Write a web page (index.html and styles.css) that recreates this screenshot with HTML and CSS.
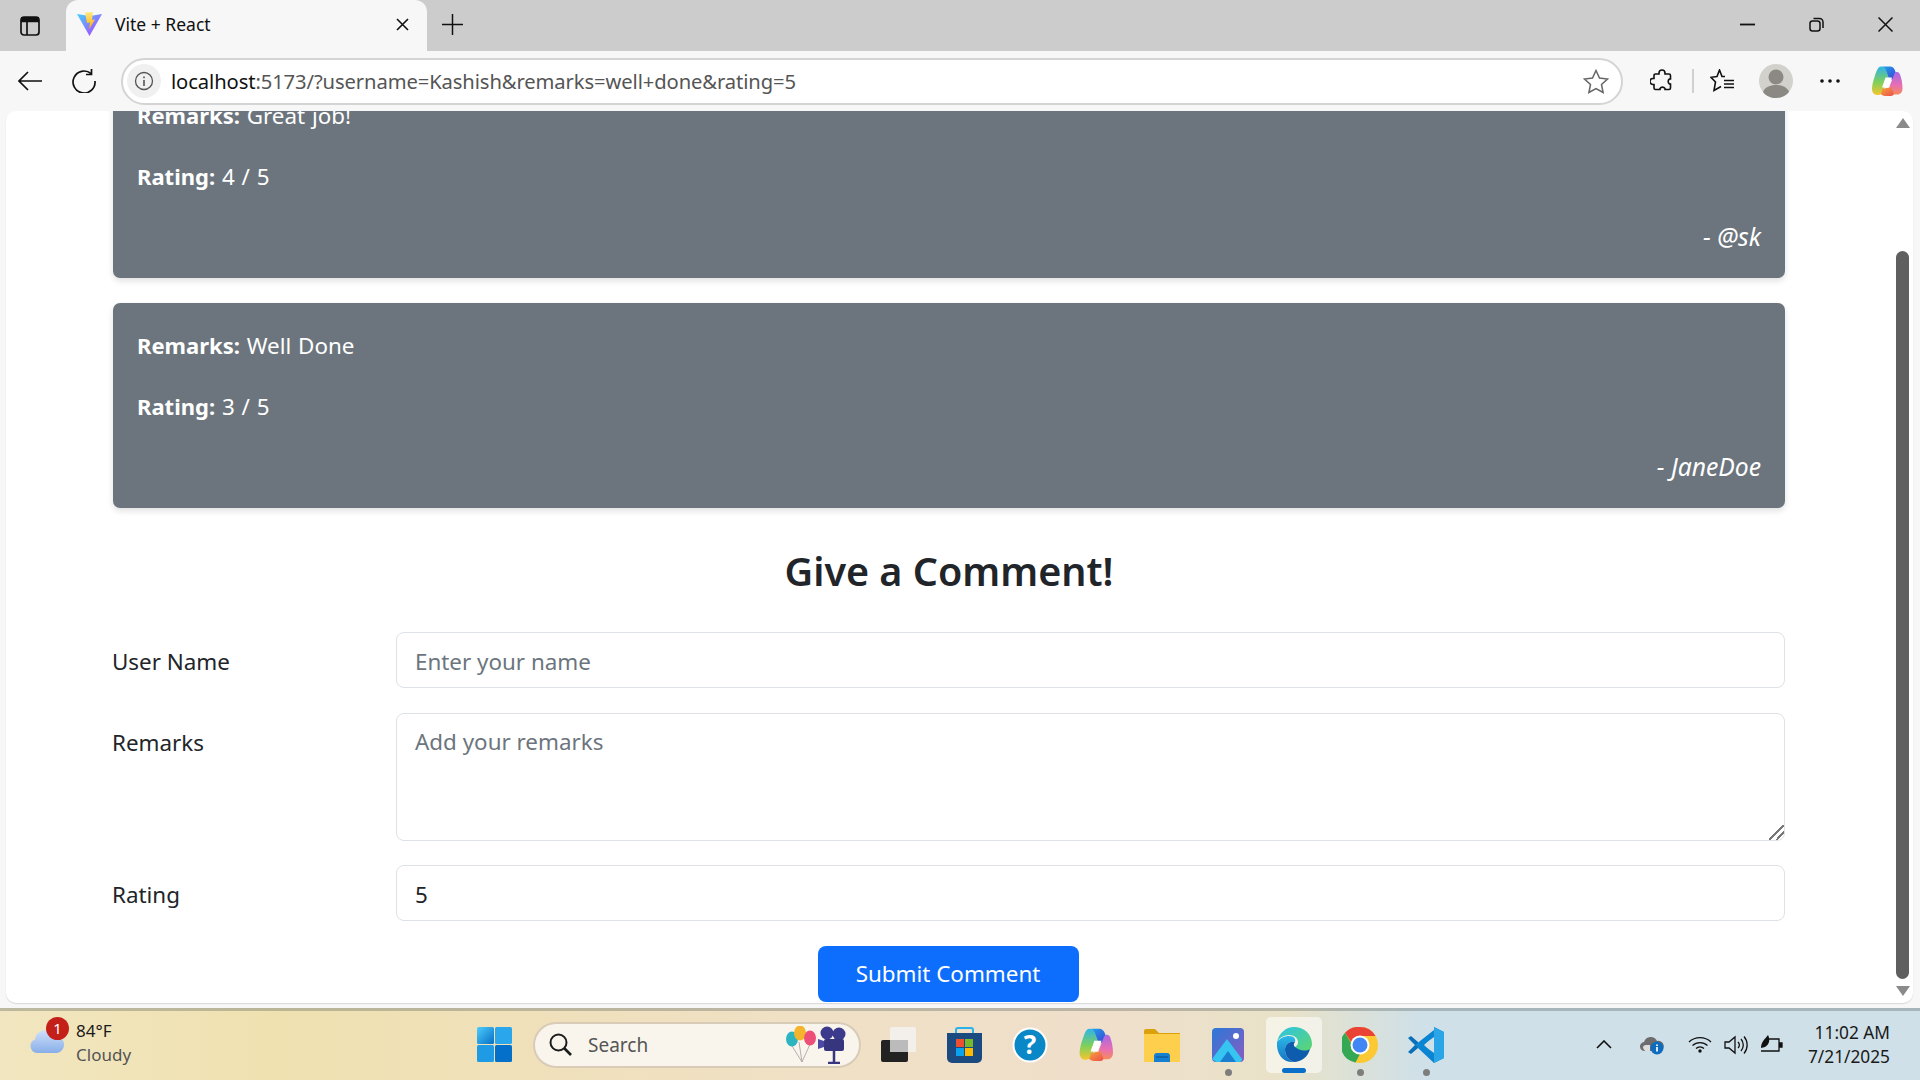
FILE: index.html
```html
<!DOCTYPE html>
<html lang="en">
<head>
<meta charset="utf-8">
<title>Vite + React</title>
<link rel="stylesheet" href="styles.css">
</head>
<body>
<svg class="defs" width="0" height="0" aria-hidden="true">
  <defs>
    <linearGradient id="cp1" x1="0" y1="0" x2="1" y2="1"><stop offset="0" stop-color="#1fa5e8"/><stop offset="0.5" stop-color="#2f6fe0"/><stop offset="1" stop-color="#3a3fd0"/></linearGradient>
    <linearGradient id="cp2" x1="0" y1="0" x2="0" y2="1"><stop offset="0" stop-color="#2fb4ea"/><stop offset="0.55" stop-color="#7fd05a"/><stop offset="1" stop-color="#f7c52e"/></linearGradient>
    <linearGradient id="cp3" x1="0" y1="0" x2="0" y2="1"><stop offset="0" stop-color="#a768e8"/><stop offset="0.6" stop-color="#e86fb0"/><stop offset="1" stop-color="#f58b5c"/></linearGradient>
    <linearGradient id="cp4" x1="0" y1="0" x2="1" y2="1"><stop offset="0" stop-color="#f5a83c"/><stop offset="1" stop-color="#ee4f4a"/></linearGradient>
    <linearGradient id="vt1" x1="0" y1="0" x2="1" y2="1"><stop offset="0" stop-color="#41d1ff"/><stop offset="1" stop-color="#bd34fe"/></linearGradient>
    <linearGradient id="vt2" x1="0" y1="0" x2="0" y2="1"><stop offset="0" stop-color="#ffea83"/><stop offset="1" stop-color="#ffa800"/></linearGradient>
    <linearGradient id="win" x1="0" y1="0" x2="1" y2="1"><stop offset="0" stop-color="#4fcdfa"/><stop offset="1" stop-color="#0570c9"/></linearGradient>
    <linearGradient id="edg" x1="0" y1="0" x2="1" y2="1"><stop offset="0" stop-color="#2bc4e8"/><stop offset="1" stop-color="#5fd66a"/></linearGradient>
    <linearGradient id="edb" x1="0" y1="0" x2="0" y2="1"><stop offset="0" stop-color="#2bb8e8"/><stop offset="1" stop-color="#1473c4"/></linearGradient>
    <linearGradient id="cld" x1="0" y1="0" x2="0" y2="1"><stop offset="0" stop-color="#cfe0fa"/><stop offset="1" stop-color="#88aee8"/></linearGradient>
    <linearGradient id="pho" x1="0" y1="0" x2="1" y2="1"><stop offset="0" stop-color="#2a78d8"/><stop offset="1" stop-color="#8a5cc0"/></linearGradient>
    <symbol id="copilot" viewBox="0 0 32 32">
      <path d="M11 1.500h8c2.500 0 4 1.500 5 4l3 9h-9l-3-8c-.8-2.500-2-4.200-4-5z" fill="url(#cp1)"/>
      <path d="M10 1.500c2.500 0 4.200 1.500 5 4l2.500 6.500-5 13c-1 3-2.500 5-5.500 5H6c-3 0-5-2.800-5-6 0-3.500 1-8 3-13.500C5.500 6 7 1.500 10 1.500z" fill="url(#cp2)"/>
      <path d="M26 7c1.500 0 2.500 1 3.200 3 1.600 4.500 2.300 9 2.300 13.500 0 3.500-2 6-5 6h-5l-3-8 5-13c.6-1 1.500-1.500 2.500-1.500z" fill="url(#cp3)"/>
      <path d="M11 24l9-2 2.500 6c.7 2-1 3-2.500 3h-6c-2 0-3.500-1-4.500-2.500 1 0 1.500-2 1.500-4.500z" fill="url(#cp4)"/>
      <path d="M14.500 12.500h6.500l-3.500 10H11z" fill="#fff"/>
    </symbol>
  </defs>
</svg>

<header class="tabstrip">
  <button class="plain side-btn" aria-label="Tab actions">
    <svg width="20" height="20" viewBox="0 0 20 20" fill="none" stroke="#111" stroke-width="1.700"><rect x="1" y="1" width="18" height="18" rx="3"/><path d="M1 5.500h18M7 5.500V19"/><path d="M1 1h18v4.500H1z" fill="#111" stroke="none"/></svg>
  </button>
  <div class="tab">
    <svg width="25" height="24" viewBox="0 0 25 24"><path d="M0 2l12.500 22L25 2l-9 1.500L12.500 4z" fill="url(#vt1)"/><path d="M8 .5l8-.5-1 8 3-.5-6 10 1-7-3 .5z" fill="url(#vt2)"/></svg>
    <span class="tab-title">Vite + React</span>
    <svg class="tab-x" width="13" height="13" viewBox="0 0 13 13" stroke="#111" stroke-width="1.600"><path d="M1 1l11 11M12 1L1 12"/></svg>
  </div>
  <svg class="new-tab" width="21" height="21" viewBox="0 0 21 21" stroke="#111" stroke-width="1.500"><path d="M10.500 0v21M0 10.500h21"/></svg>
  <div class="win-ctrls">
    <svg width="15" height="15" viewBox="0 0 15 15" stroke="#111" stroke-width="1.800"><path d="M0 7.500h15"/></svg>
    <svg width="15" height="15" viewBox="0 0 15 15" fill="none" stroke="#111" stroke-width="1.500"><rect x="1" y="4" width="10" height="10" rx="2.500"/><path d="M4.500 1.500h6a3.500 3.500 0 0 1 3.500 3.500v6"/></svg>
    <svg width="15" height="15" viewBox="0 0 15 15" stroke="#111" stroke-width="1.500"><path d="M.5.5l14 14M14.500.5l-14 14"/></svg>
  </div>
</header>

<nav class="toolbar">
  <svg class="tb-back" width="24" height="20" viewBox="0 0 24 20" fill="none" stroke="#111" stroke-width="1.700"><path d="M24 10H1M10 1l-9 9 9 9"/></svg>
  <svg class="tb-reload" width="24" height="24" viewBox="0 0 24 24" fill="none" stroke="#111" stroke-width="1.700"><path d="M19 4.500A11 11 0 1 0 23 12"/><path d="M19.500 0v5.500H14"/></svg>
  <div class="address">
    <span class="info-pill">
      <svg width="20" height="20" viewBox="0 0 20 20" fill="none" stroke="#555" stroke-width="1.300"><circle cx="10" cy="10" r="8.500"/><path d="M10 9v6M10 5.500v1.800" stroke-width="1.600"/></svg>
    </span>
    <span class="url"><span class="url-host">localhost</span>:5173/?username=Kashish&amp;remarks=well+done&amp;rating=5</span>
    <svg class="star" width="26" height="25" viewBox="0 0 26 25" fill="none" stroke="#666" stroke-width="1.500"><path d="M13 1.500l3.500 7.500 8 1-6 5.500 1.600 8L13 19.500 5.900 23.500l1.600-8-6-5.500 8-1z"/></svg>
  </div>
  <svg class="tb-ext" width="24" height="24" viewBox="0 0 24 24" fill="none" stroke="#111" stroke-width="1.600"><path d="M9 4a3 3 0 0 1 6 0v1h4a1.500 1.500 0 0 1 1.500 1.500V10h-1a3 3 0 0 0 0 5h1v4a1.500 1.500 0 0 1-1.500 1.500h-4v-1a3 3 0 0 0-5 0v1H5.500A1.500 1.500 0 0 1 4 19v-3.500H3a3 3 0 0 1 0-6h1V6.500A1.500 1.500 0 0 1 5.500 5H9z"/></svg>
  <span class="tb-div"></span>
  <svg class="tb-fav" width="24" height="24" viewBox="0 0 24 24" fill="none" stroke="#111" stroke-width="1.600"><path d="M15 7.500h-3L9.500 1 7 7.500l-6 .8 4.500 4.700L4 21.500l7-4"/><path d="M14 11.500h10M14 15h10M14 18.500h10"/></svg>
  <svg class="tb-avatar" width="34" height="34" viewBox="0 0 34 34"><circle cx="17" cy="17" r="17" fill="#d3d1cc"/><circle cx="17" cy="13" r="7.500" fill="#8c8884"/><path d="M4 28c2-5 7-7 13-7s11 2 13 7c-3 4-8 6-13 6S7 32 4 28z" fill="#8c8884"/></svg>
  <svg class="tb-more" width="20" height="4" viewBox="0 0 20 4" fill="#111"><circle cx="2" cy="2" r="1.800"/><circle cx="10" cy="2" r="1.800"/><circle cx="18" cy="2" r="1.800"/></svg>
  <svg class="tb-copilot" width="34" height="32"><use href="#copilot"/></svg>
</nav>

<main class="window">
  <div class="page">
    <div class="viewport">
      <div class="content">
        <article class="card">
          <p><strong>Remarks:</strong> Great job!</p>
          <p><strong>Rating:</strong> 4 / 5</p>
          <p class="by">- @sk</p>
        </article>
        <article class="card">
          <p><strong>Remarks:</strong> Well Done</p>
          <p><strong>Rating:</strong> 3 / 5</p>
          <p class="by">- JaneDoe</p>
        </article>
        <h2 class="form-title">Give a Comment!</h2>
        <form class="form">
          <label class="form-label" for="u">User Name</label>
          <input class="field" id="u" type="text" placeholder="Enter your name">
          <label class="form-label" for="r">Remarks</label>
          <textarea class="field area" id="r" placeholder="Add your remarks"></textarea>
          <label class="form-label" for="n">Rating</label>
          <input class="field" id="n" type="text" value="5">
          <button class="submit" type="button">Submit Comment</button>
        </form>
      </div>
    </div>
    <div class="scrollbar">
      <svg width="16" height="12" viewBox="0 0 16 12" fill="#8a8a8a"><path d="M8 1l7 10H1z"/></svg>
      <div class="track"><div class="thumb"></div></div>
      <svg width="16" height="12" viewBox="0 0 16 12" fill="#8a8a8a"><path d="M8 11L1 1h14z"/></svg>
    </div>
  </div>
</main>

<footer class="taskbar">
  <div class="weather">
    <div class="wx-icon">
      <svg width="36" height="24" viewBox="0 0 36 24"><path d="M8 24a7 7 0 0 1-2-13.500A10 10 0 0 1 25 7a8.500 8.500 0 0 1 3 17z" fill="url(#cld)"/></svg>
      <span class="wx-badge">1</span>
    </div>
    <div class="wx-text">
      <span class="wx-temp">84°F</span>
      <span class="wx-cond">Cloudy</span>
    </div>
  </div>
  <div class="tasks">
    <svg class="start" width="35" height="35" viewBox="0 0 35 35"><rect width="17" height="17" rx="1.500" fill="url(#win)"/><rect x="18" width="17" height="17" rx="1.500" fill="#2aa6ec"/><rect y="18" width="17" height="17" rx="1.500" fill="#1f9be6"/><rect x="18" y="18" width="17" height="17" rx="1.500" fill="#0570c9"/></svg>
    <div class="search">
      <svg width="23" height="23" viewBox="0 0 23 23" fill="none" stroke="#1c1c1c" stroke-width="2"><circle cx="9.500" cy="9.500" r="8"/><path d="M15 15l7 7" stroke-width="2.600"/></svg>
      <span class="search-text">Search</span>
      <svg class="search-art" width="66" height="38" viewBox="0 0 66 38">
        <path d="M14 16L17 36M7 20L17 36M26 16L17 36" stroke="#a89aa0" stroke-width=".8" fill="none"/>
        <ellipse cx="7" cy="13" rx="6" ry="7.500" fill="#2cb5c0"/><ellipse cx="15" cy="7" rx="6" ry="7.500" fill="#f4b52c"/><ellipse cx="25" cy="12" rx="6" ry="7.500" fill="#ee4f78"/>
        <circle cx="42" cy="7" r="6.500" fill="#3c3a8c"/><circle cx="54" cy="8" r="6.500" fill="#3c3a8c"/><rect x="39" y="13" width="20" height="12" rx="2" fill="#38357f"/><path d="M39 15l-6-2v10l6-2z" fill="#4c49a5"/><path d="M49 25v11M43 37h12" stroke="#38357f" stroke-width="2.500"/>
      </svg>
    </div>
    <div class="slot">
      <svg width="35" height="35" viewBox="0 0 35 35"><rect y="13" width="27" height="22" rx="2" fill="#222"/><rect x="9" width="26" height="25" rx="1.500" fill="#f3f1ee" opacity=".9"/><rect x="9" y="13" width="18" height="12" fill="#bbb"/></svg>
    </div>
    <div class="slot">
      <svg width="35" height="36" viewBox="0 0 35 36"><path d="M9 9V3a2 2 0 0 1 2-2h13a2 2 0 0 1 2 2v6" fill="none" stroke="#29b1ea" stroke-width="2"/><path d="M0 6h35v25a5 5 0 0 1-5 5H5a5 5 0 0 1-5-5z" fill="#1a4a80"/><rect x="9" y="12" width="8" height="8" fill="#ee4f30"/><rect x="18" y="12" width="8" height="8" fill="#78b82a"/><rect x="9" y="21" width="8" height="8" fill="#0aa2ee"/><rect x="18" y="21" width="8" height="8" fill="#fdb800"/></svg>
    </div>
    <div class="slot">
      <svg width="36" height="36" viewBox="0 0 36 36"><ellipse cx="18" cy="18" rx="17.500" ry="17.500" fill="#fff"/><circle cx="18" cy="18" r="15.500" fill="#0a87c6"/><text class="help-q" x="18" y="27" text-anchor="middle">?</text></svg>
    </div>
    <div class="slot"><svg width="36" height="35"><use href="#copilot"/></svg></div>
    <div class="slot">
      <svg width="36" height="34" viewBox="0 0 36 34"><path d="M0 3a2 2 0 0 1 2-2h9l4 4h21v6H0z" fill="#dba10c"/><path d="M0 6h36v28H0z" fill="#fdcf4d"/><path d="M10 34v-6a3 3 0 0 1 3-3h10a3 3 0 0 1 3 3v6z" fill="#1580d0"/><path d="M12 29h12" stroke="#0d5fa5" stroke-width="1.500"/></svg>
    </div>
    <div class="slot with-dot">
      <svg width="32" height="34" viewBox="0 0 32 34"><rect width="32" height="34" rx="4" fill="url(#pho)"/><circle cx="24" cy="8" r="3" fill="#fff"/><path d="M0 31L15 11l15 20a3 3 0 0 1-3 3H4z" fill="#35c5f0"/><path d="M8 34l8-11 8 11z" fill="#1a7fd0"/></svg>
    </div>
    <div class="slot active">
      <svg width="36" height="36" viewBox="0 0 36 36"><path d="M1 15C3 6 10 0 18 0c10 0 18 7 18 17 0 5-4 8-9 8-4 0-8-2-8-4 0-2 3-2 3-6 0-4-4-7-9-7C8 8 3 11 1 15z" fill="url(#edg)"/><path d="M1 15c3-4 8-6 12-6 5 0 7 3 6 6-5-1-10 2-10 8 0 5 3 10 9 12C8 36 0 28 1 15z" fill="url(#edb)"/><path d="M9 23c0-6 5-9 10-8-1 1-2 3 0 5 3 3 10 5 15 2-2 8-9 13-16 13-6-2-9-7-9-12z" fill="#0e5cae"/></svg>
      <span class="active-bar"></span>
    </div>
    <div class="slot with-dot">
      <svg width="36" height="36" viewBox="0 0 36 36"><circle cx="18" cy="18" r="18" fill="#fcc934"/><path d="M18 0a18 18 0 0 1 15.600 9H18a9 9 0 0 0-8.600 6.500L3 5.800A18 18 0 0 1 18 0z" fill="#ea4335"/><path d="M3 5.800l6.500 11A9 9 0 0 0 18 27l-4.500 8.400A18 18 0 0 1 3 5.800z" fill="#34a853"/><circle cx="18" cy="18" r="9.500" fill="#fff"/><circle cx="18" cy="18" r="7.500" fill="#4285f4"/></svg>
    </div>
    <div class="slot with-dot">
      <svg width="36" height="36" viewBox="0 0 36 36"><path d="M26 0l10 5v26l-10 5-16-15 16-13V8L16 18l10 10V0z" fill="#0a85d1"/><path d="M26 0v36l10-5V5z" fill="#2aa5e8"/><path d="M10 21L3 27 0 25l7-7-7-7 3-2 7 6z" fill="#0a6fb8"/><path d="M7 18L26 3v7L15 18l11 8v7z" fill="#0a85d1"/></svg>
    </div>
  </div>
  <div class="tray">
    <svg class="tray-chev" width="16" height="9" viewBox="0 0 16 9" fill="none" stroke="#111" stroke-width="1.600"><path d="M1 8l7-7 7 7"/></svg>
    <div class="tray-od">
      <svg width="24" height="20" viewBox="0 0 24 20"><path d="M5 16a4.500 4.500 0 0 1-1-9 7 7 0 0 1 13-1 5 5 0 0 1 3 10z" fill="#6d6d6d"/><path d="M3 13a3 3 0 0 1 3-3h4v6H5z" fill="#ddd"/><circle cx="17" cy="13" r="6.500" fill="#0f6cbd"/><path d="M17 12v4.500M17 9.500v1.400" stroke="#fff" stroke-width="1.700"/></svg>
    </div>
    <svg width="24" height="17" viewBox="0 0 24 17" fill="none" stroke="#111" stroke-width="1.300"><path d="M1 6a16 16 0 0 1 22 0M4.500 9.500a11 11 0 0 1 15 0M8 12.500a6 6 0 0 1 8 0"/><circle cx="12" cy="15" r="1.700" fill="#111" stroke="none"/></svg>
    <svg width="24" height="20" viewBox="0 0 24 20" fill="none" stroke="#111" stroke-width="1.300"><path d="M1 7h4l6-5v16l-6-5H1z"/><path d="M14 7a4 4 0 0 1 0 6M17 4a9 9 0 0 1 0 12M20 1.500a13 13 0 0 1 0 17"/></svg>
    <svg width="24" height="20" viewBox="0 0 24 20" fill="none" stroke="#111" stroke-width="1.300"><path d="M9 4h10v12H1"/><path d="M19 8h3v4h-3" fill="#111"/><path d="M1 13c0-6 4-9 7-13 2 4 2 9-3 12z" fill="#111" stroke="none"/></svg>
    <div class="clock">
      <span>11:02 AM</span>
      <span>7/21/2025</span>
    </div>
  </div>
</footer>
</body>
</html>
```
FILE: styles.css
```css
* { box-sizing: border-box; }
html, body { height: 100%; }
body {
  margin: 0;
  height: 1080px;
  display: flex;
  flex-direction: column;
  overflow: hidden;
  background: #f7f7f7;
  font-family: "Noto Sans", "Open Sans", sans-serif;
  color: #212529;
}
.defs { position: absolute; }
svg { display: block; flex: none; }
.plain { border: 0; background: none; padding: 0; }

.tabstrip {
  height: 51px;
  flex: none;
  background: #cccccc;
  display: flex;
  align-items: center;
  padding-left: 20px;
}
.side-btn { width: 46px; }
.tab {
  width: 361px;
  height: 51px;
  background: #f7f7f7;
  border-radius: 12px 12px 0 0;
  display: flex;
  align-items: center;
  padding: 0 18px 3px 11px;
  gap: 13px;
}
.tab-title { font-size: 17.500px; color: #111; flex: 1; }
.new-tab { margin: 0 0 3px 15px; }
.win-ctrls {
  margin-left: auto;
  display: flex;
  gap: 54px;
  padding-right: 27px;
  padding-bottom: 3px;
}

.toolbar {
  height: 60px;
  flex: none;
  background: #f7f7f7;
  display: flex;
  align-items: center;
  padding: 0 0 0 18px;
}
.tb-reload { margin-left: 30px; }
.address {
  margin-left: 25px;
  flex: none;
  width: 1502px;
  height: 47px;
  border: 2px solid #d4d4d4;
  border-radius: 24px;
  background: #fff;
  display: flex;
  align-items: center;
  padding: 0 12px 0 4px;
}
.info-pill {
  width: 34px;
  height: 34px;
  border-radius: 50%;
  background: #f0f0f0;
  display: flex;
  align-items: center;
  justify-content: center;
}
.url { margin-left: 10px; flex: 1; font-size: 20.200px; color: #555; white-space: nowrap; letter-spacing: -.1px; }
.url-host { color: #111; }
.tb-ext { margin-left: 27px; }
.tb-div { width: 2px; height: 24px; background: #d0d0d0; margin-left: 18px; }
.tb-fav { margin-left: 16px; }
.tb-avatar { margin-left: 25px; }
.tb-more { margin-left: 27px; }
.tb-copilot { margin-left: 30px; }

.window {
  flex: 1;
  min-height: 0;
  display: flex;
  padding: 0 7px 5px 6px;
  background: #f7f7f7;
}
.page {
  flex: 1;
  display: flex;
  min-width: 0;
  background: #fff;
  border-radius: 10px;
  box-shadow: 0 1px 1px #d8d8d8;
  overflow: hidden;
}
.viewport {
  flex: 1;
  min-width: 0;
  display: flex;
  flex-direction: column;
  justify-content: flex-end;
  overflow: hidden;
}
.content {
  padding: 0 110px 1px 107px;
  font-size: 22.400px;
  line-height: 36px;
}
.card {
  background: #6c757d;
  color: #fff;
  border-radius: 7px;
  padding: 24px 24px 2px;
  margin-bottom: 25px;
  height: 205px;
  box-shadow: 0 3px 6px rgba(0, 0, 0, .12);
}
.card p { margin: 0 0 24px; word-spacing: 1px; }
.card strong { font-weight: 700; font-size: 22px; }
.card .by { text-align: right; font-style: italic; font-size: 24.700px; word-spacing: 0; }
.form-title {
  margin: 39px 0 37px;
  text-align: center;
  font-size: 39.500px;
  line-height: 48px;
  font-weight: 600;
  color: #212529;
}
.form {
  display: grid;
  grid-template-columns: 283px 1fr;
  row-gap: 25px;
}
.form-label { padding-top: 11.500px; margin-left: -1px; }
.field {
  width: 100%;
  height: 56px;
  border: 1px solid #dee2e6;
  border-radius: 8px;
  padding: 10px 19px 8px 18px;
  font: inherit;
  color: #212529;
  background: #fff;
  outline: none;
  display: block;
}
.field::placeholder { color: #6c757d; opacity: 1; }
.area { height: 128px; resize: vertical; margin-bottom: -1px; }
.area::-webkit-resizer {
  background: linear-gradient(135deg, transparent 0 46%, #777 46% 54%, transparent 54% 70%, #777 70% 78%, transparent 78%);
}
.submit {
  grid-column: 1 / -1;
  justify-self: center;
  width: 261px;
  height: 56px;
  border: 0;
  border-radius: 8px;
  background: #0d6efd;
  color: #fff;
  font: inherit;
  margin-left: -2px;
}

.scrollbar {
  width: 18px;
  flex: none;
  display: flex;
  flex-direction: column;
  align-items: center;
  padding: 6px 3px 6px 0;
}
.track { flex: 1; width: 13px; display: flex; flex-direction: column; padding: 122px 0 6px; }
.thumb { flex: 1; background: #5f5f5f; border-radius: 7px; }

.taskbar {
  height: 72px;
  flex: none;
  display: flex;
  align-items: center;
  border-top: 3px solid rgba(90, 100, 100, .35);
  background: linear-gradient(90deg, #f2e6c0 0%, #efe1b0 14%, #f0e0c4 40%, #efdfcb 58%, #e8e2c8 67%, #cfe0e8 74%, #cfe0e8 100%);
  padding: 0 0 2px 29px;
}
.weather { display: flex; width: 448px; align-items: flex-start; margin-bottom: 3px; }
.wx-icon { position: relative; width: 36px; height: 24px; margin-top: 10px; }
.wx-badge {
  position: absolute;
  left: 17px;
  top: -12px;
  width: 23px;
  height: 23px;
  border-radius: 50%;
  background: #c4201a;
  color: #fff;
  font-size: 15px;
  line-height: 23px;
  text-align: center;
}
.wx-text {
  margin-left: 11px;
  display: flex;
  flex-direction: column;
  font-size: 17px;
  line-height: 24px;
  color: #1a1a1a;
}
.wx-cond { color: #555; }
.tasks { display: flex; align-items: center; }
.start { margin-right: 21px; }
.search {
  width: 328px;
  height: 46px;
  border-radius: 23px;
  background: #f9f4ec;
  border: 2px solid #d8cbb8;
  display: flex;
  align-items: center;
  padding-left: 14px;
  margin-right: 4px;
}
.search-text { margin-left: 16px; font-size: 19px; color: #555; flex: 1; }
.search-art { margin-right: 8px; }
.slot {
  width: 66px;
  height: 56px;
  display: flex;
  align-items: center;
  justify-content: center;
  position: relative;
}
.with-dot::after {
  content: "";
  position: absolute;
  left: 30px;
  bottom: -3px;
  width: 7px;
  height: 7px;
  border-radius: 50%;
  background: #7d7d7d;
}
.active { background: rgba(255, 255, 255, .55); border-radius: 5px; width: 56px; margin: 0 5px; }
.active-bar {
  position: absolute;
  left: 16px;
  bottom: 0;
  width: 24px;
  height: 5px;
  border-radius: 3px;
  background: #0a6fc8;
}
.help-q { font-family: "Noto Sans", sans-serif; font-weight: 700; font-size: 26px; fill: #fff; }
.tray {
  margin-left: auto;
  display: flex;
  align-items: center;
  gap: 12px;
  padding-right: 30px;
}
.tray-chev { margin-right: 16px; }
.tray-od { margin-right: 12px; }
.clock {
  margin-left: 12px;
  display: flex;
  flex-direction: column;
  align-items: flex-end;
  font-size: 17.300px;
  line-height: 24px;
  color: #1a1a1a;
}
```
